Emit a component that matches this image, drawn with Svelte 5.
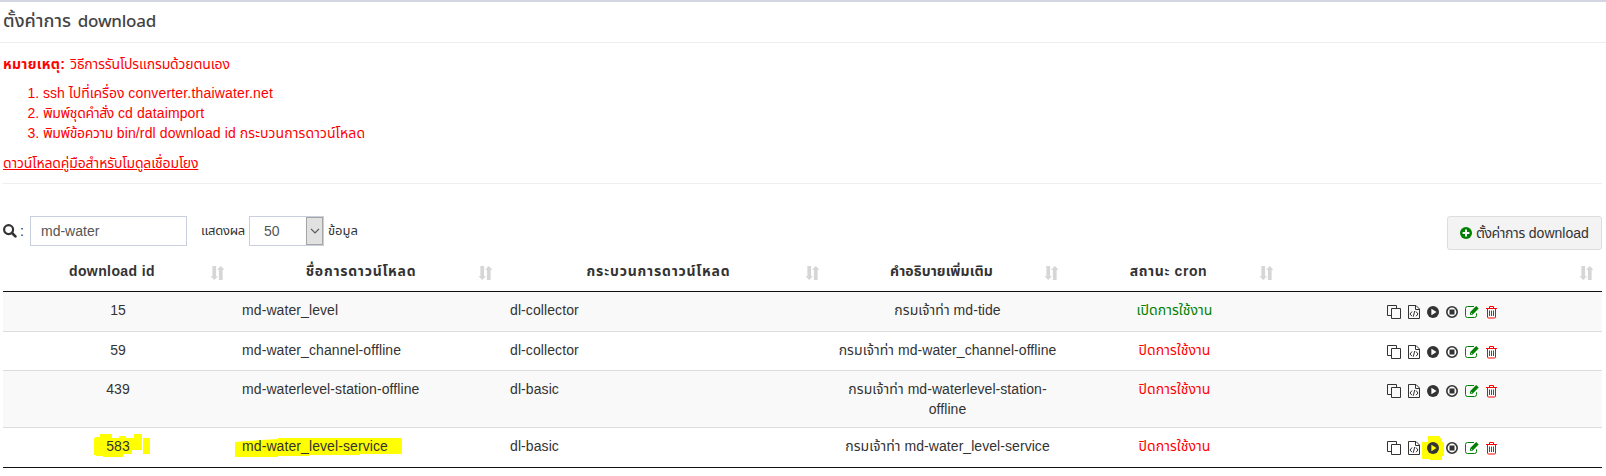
<script>
  const columns = [
    { title: 'download id', cls: 'hid' },
    { title: 'ชื่อการดาวน์โหลด', cls: 'hname' },
    { title: 'กระบวนการดาวน์โหลด', cls: 'hproc' },
    { title: 'คำอธิบายเพิ่มเติม', cls: 'hdesc' },
    { title: 'สถานะ cron', cls: 'hcron' },
    { title: '', cls: '' }
  ];
  const rows = [
    { id: '15', name: 'md-water_level', proc: 'dl-collector', desc: ['md-tide'], on: true },
    { id: '59', name: 'md-water_channel-offline', proc: 'dl-collector', desc: ['md-water_channel-offline'], on: false },
    { id: '439', name: 'md-waterlevel-station-offline', proc: 'dl-basic', desc: ['md-waterlevel-station-', 'offline'], on: false },
    { id: '583', name: 'md-water_level-service', proc: 'dl-basic', desc: ['md-water_level-service'], on: false, marked: true }
  ];
</script>

<main>
  <header><h1><span class="th">ตั้งค่าการ</span> <span class="en">download</span></h1></header>

  <section class="note">
    <p><b>หมายเหตุ:</b> <span class="howto">วิธีการรันโปรแกรมด้วยตนเอง</span></p>
    <ol>
      <li>ssh <span class="s1">ไปที่เครื่อง</span> <span class="host">converter.thaiwater.net</span></li>
      <li><span class="s2">พิมพ์ชุดคำสั่ง</span> <span class="cmd">cd dataimport</span></li>
      <li><span class="s3">พิมพ์ข้อความ</span> <span class="cmd">bin/rdl download id</span> <span class="s4">กระบวนการดาวน์โหลด</span></li>
    </ol>
    <p><a href="#manual">ดาวน์โหลดคู่มือสำหรับโมดูลเชื่อมโยง</a></p>
  </section>

  <div class="tools">
    <svg class="search" viewBox="0 0 14 14"><circle cx="5.6" cy="5.6" r="4.5" fill="none" stroke="#333" stroke-width="2.2"/><path d="M9 9l3.4 3.4" stroke="#333" stroke-width="2.7" stroke-linecap="round"/></svg>
    <span class="colon">:</span>
    <div class="input">md-water</div>
    <span class="show">แสดงผล</span>
    <div class="select"><span>50</span><i><svg viewBox="0 0 10 6"><path d="M1 .8l4 4 4-4" fill="none" stroke="#555" stroke-width="1.2"/></svg></i></div>
    <span class="data">ข้อมูล</span>
    <button><svg viewBox="0 0 12 12"><circle cx="6" cy="6" r="6" fill="#008000"/><path d="M6 2.6v6.8M2.6 6h6.8" stroke="#fff" stroke-width="2"/></svg><span class="bth">ตั้งค่าการ</span> <span class="ben">download</span></button>
  </div>

  <div class="table">
    <div class="row head">
      {#each columns as c}
        <div class="cell"><span class={c.cls}>{c.title}</span>
          <svg class="sort" viewBox="0 0 15 15"><path d="M2 0h4v11h2L4 15 0 11h2zM9 15h4V4h2L11 0 7 4h2z" fill="#d6d6d6"/></svg>
        </div>
      {/each}
    </div>
    {#each rows as r, i}
      <div class="row body r{i}">
        <div class="cell"><span class="num">{#if r.marked}<svg class="mark m1" viewBox="0 0 56 24"><path d="M0 4H1V3H6V0H18V4H25V2H32V4H40V0H48V16H38V20H29V23H9V22H2V21H0zM49 4h7v16h-7z"/></svg>{/if}<span class="txt">{r.id}</span></span></div>
        <div class="cell left"><span class="name">{#if r.marked}<svg class="mark m2" viewBox="0 0 167 19"><path d="M0 4L12 3 43 1V0H167V16H125V17H74V18H43V19H0z"/></svg>{/if}<span class="txt">{r.name}</span></span></div>
        <div class="cell left"><span class="proc">{r.proc}</span></div>
        <div class="cell"><span class="kt">กรมเจ้าท่า</span> {r.desc[0]}{#if r.desc[1]}<br />{r.desc[1]}{/if}</div>
        <div class="cell"><span class="state" class:on={r.on}>{r.on ? 'เปิดการใช้งาน' : 'ปิดการใช้งาน'}</span></div>
        <div class="cell icons">
          <svg width="14" viewBox="0 0 14 14" fill="none" stroke="#333"><path d="M4.500 3.500h9v10h-9zM4 10.500H.500V.500h9V3"/></svg>
          <svg width="12" viewBox="0 0 12 14" fill="none" stroke="#333"><path d="M.5.5H8L11.5 4v9.500H.5zM7.500.5v4h4M4 6.500L2 9l2 2.200M8 6.500L10 9l-2 2.200M6.700 6L5.300 11.700"/></svg>
          <span class="play">{#if r.marked}<svg class="mark m3" viewBox="0 0 22 24"><path d="M0 6H6V0H18V2H20V6H22V20H20V24H8V23H0z"/></svg>{/if}<svg width="12" viewBox="0 0 12 14"><circle cx="6" cy="7" r="6" fill="#333"/><path d="M4.400 3.800v6.400L9.500 7z" fill={r.marked ? '#ff0' : '#fff'}/></svg></span>
          <svg width="12" viewBox="0 0 12 14"><circle cx="6" cy="7" r="5.200" fill="none" stroke="#333" stroke-width="1.600"/><path d="M3.500 4.500h5v5h-5z" fill="#333"/></svg>
          <svg width="14" viewBox="0 0 14 14" fill="none" stroke="#008000"><path d="M9 1.500H2.500a2 2 0 0 0-2 2v7a2 2 0 0 0 2 2h7a2 2 0 0 0 2-2V8.300"/><path d="M5 9.800V7.200L11.200 1l2.500 2.500-6.200 6.300z" fill="#008000" stroke="none"/><path d="M5.800 7.700l1.300 1.300" stroke="#fff" stroke-width=".7"/></svg>
          <svg width="11" viewBox="0 0 11 14" fill="none" stroke="#f00"><path d="M0 3.500h11M3.500 3V1.500h4V3M1.500 3.500v8.500a1 1 0 0 0 1 1h6a1 1 0 0 0 1-1V3.500M3.500 5.500v5.500M5.500 5.500v5.500M7.500 5.500v5.500"/></svg>
        </div>
      </div>
    {/each}
  </div>
</main>

<style>
  :global(body) { margin: 0; background: #fff; overflow: hidden; }
  main { box-sizing: border-box; width: 1606px; height: 476px; border-top: 2px solid #d3d5e3; font: 14px/20px "Liberation Sans", "Noto Sans Thai", sans-serif; color: #333; white-space: nowrap; overflow: hidden; }
  header { height: 40px; border-bottom: 1px solid #eee; padding-left: 3px; }
  h1 { margin: 0; font: 500 18px/37px "Noto Sans", "Noto Sans Thai", sans-serif; color: #444; }
  .th { letter-spacing: .1px; margin-right: 2px; }
  .en { font-size: 17px; letter-spacing: -.25px; }
  .note { margin: 0 4px 0 3px; height: 141px; border-bottom: 1px solid #eee; color: #f00; box-sizing: border-box; }
  .note p { margin: 0; padding-top: 11px; line-height: 20px; height: 20px; }
  .note b { letter-spacing: .3px; }
  .howto { margin-left: 1px; letter-spacing: -.15px; }
  ol { margin: 9px 0 -1px; padding-left: 40px; }
  li { height: 20px; }
  .s1 { letter-spacing: -.05px; }
  .host { letter-spacing: .17px; }
  .s2, .s3 { letter-spacing: -.4px; }
  .cmd { letter-spacing: .12px; }
  .s4 { letter-spacing: .1px; }
  a { color: #f00; text-decoration: underline; letter-spacing: -.14px; }
  .tools { display: flex; margin: 32px 4px 0 3px; height: 34px; align-items: flex-start; line-height: 30px; }
  .search { width: 14px; height: 14px; margin-top: 8px; }
  .colon { width: 13px; padding-left: 3px; box-sizing: border-box; }
  .input { box-sizing: border-box; width: 157px; height: 30px; border: 1px solid #c9cfdd; padding-left: 10px; color: #555; line-height: 29px; }
  .show { width: 47px; padding-left: 14px; font-size: 13px; letter-spacing: -.25px; margin-right: 1px; line-height: 29px; }
  .select { box-sizing: border-box; display: flex; justify-content: space-between; width: 75px; height: 30px; border: 1px solid #c9cfdd; padding-left: 14px; color: #555; line-height: 29px; }
  .select i { box-sizing: border-box; width: 17px; height: 28px; background: #e1e1e1; border: 1px solid #a5a5a5; display: flex; align-items: center; justify-content: center; }
  .select svg { width: 10px; height: 6px; }
  .data { padding-left: 4px; font-size: 13px; line-height: 29px; }
  button { margin-left: auto; box-sizing: border-box; width: 155px; height: 34px; border: 1px solid #ddd; border-radius: 3px; background: #f3f3f3; color: #333; font: inherit; display: flex; align-items: center; gap: 4px; padding: 0 12px; }
  button svg { width: 12px; height: 12px; flex: none; }
  .bth { letter-spacing: -.4px; }
  .table { margin: 0 4px 0 3px; border-bottom: 1px solid #111; }
  .row { display: grid; grid-template-columns: 230px 268px 327px 239px 215px 320px; box-sizing: border-box; }
  .head { height: 42px; border-bottom: 1px solid #111; font-weight: bold; }
  .head .cell { display: flex; justify-content: center; align-items: flex-start; position: relative; padding: 11px 18px 0 6px; }
  .hid { letter-spacing: .4px; }
  .hname { letter-spacing: .75px; }
  .hproc { letter-spacing: .8px; }
  .hdesc { letter-spacing: .1px; }
  .hcron { letter-spacing: .6px; }
  .sort { position: absolute; right: 8px; top: 16px; width: 15px; height: 14px; }
  .cell { text-align: center; padding-top: 8px; letter-spacing: .06px; }
  .cell.left { text-align: left; padding-left: 9px; letter-spacing: .09px; }
  .body { height: 40px; border-bottom: 1px solid #ddd; }
  .r1 { height: 39px; }
  .r2 { height: 57px; }
  .r3 { height: 39px; border: 0; }
  .r0, .r2 { background: #f9f9f9; }
  .state { color: #f00; }
  .state.on { color: #008000; }
  .icons { display: flex; justify-content: center; padding-top: 13px; }
  .icons > * { margin-right: 7px; }
  .icons > *:last-child { margin-right: 0; }
  .icons svg { height: 14px; display: block; }
  .play, .num, .name { position: relative; }
  .txt { position: relative; }
  .mark { position: absolute; fill: #ff0; }
  .m1 { width: 56px; height: 24px; left: -12px; top: -4px; }
  .m2 { width: 167px; height: 19px; left: -7px; top: 0; }
  .icons .m3 { width: 22px; height: 24px; left: -5px; top: -5px; }
  .play svg:last-child { position: relative; }
</style>
